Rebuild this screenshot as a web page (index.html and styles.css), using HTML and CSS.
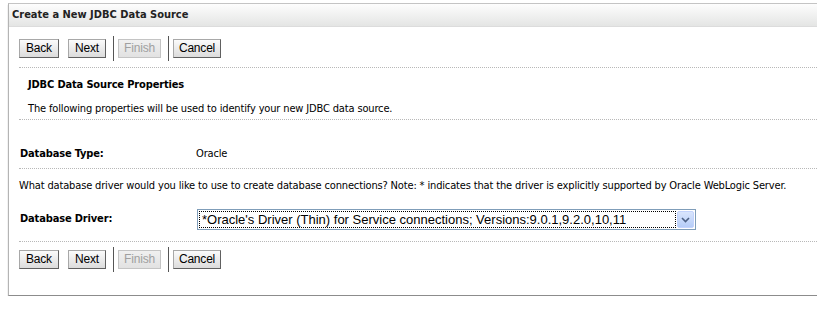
FILE: index.html
```html
<!DOCTYPE html>
<html lang="en">
<head>
  <meta charset="UTF-8" />
  <title>Create a New JDBC Data Source</title>
  <link rel="stylesheet" href="styles.css">
</head>
<body>
  <div class="panel">
    <div class="panel-title">Create a New JDBC Data Source</div>

    <div class="panel-body">
      <div class="button-bar">
        <button class="btn btn-back">Back</button>
        <button class="btn btn-next">Next</button>
        <span class="sep"></span>
        <button class="btn btn-finish" disabled>Finish</button>
        <span class="sep"></span>
        <button class="btn btn-cancel">Cancel</button>
      </div>

      <div class="section">
        <h2>JDBC Data Source Properties</h2>
        <p>The following properties will be used to identify your new JDBC data source.</p>
      </div>

      <div class="field row-type">
        <label>Database Type:</label>
        <span class="value">Oracle</span>
      </div>

      <div class="note">What database driver would you like to use to create database connections? Note: * indicates that the driver is explicitly supported by Oracle WebLogic Server.</div>

      <div class="field row-driver">
        <label>Database Driver:</label>
        <div class="select">
          <span class="select-text">*Oracle's Driver (Thin) for Service connections; Versions:9.0.1,9.2.0,10,11</span>
          <span class="select-arrow">
            <svg width="9" height="6" viewBox="0 0 9 6"><path d="M1 1 L4.5 4.5 L8 1" fill="none" stroke="#4d6185" stroke-width="1.6"/></svg>
          </span>
        </div>
      </div>

      <div class="button-bar bottom">
        <button class="btn btn-back">Back</button>
        <button class="btn btn-next">Next</button>
        <span class="sep"></span>
        <button class="btn btn-finish" disabled>Finish</button>
        <span class="sep"></span>
        <button class="btn btn-cancel">Cancel</button>
      </div>
    </div>
  </div>
</body>
</html>
```

FILE: styles.css
```css
* {
  margin: 0;
  padding: 0;
  box-sizing: border-box;
}

body {
  background: #fff;
  font-family: Tahoma, "DejaVu Sans Condensed", "DejaVu Sans", sans-serif;
  font-size: 11px;
  letter-spacing: -0.15px;
  color: #000;
}

.panel {
  margin: 3px 0 0 8px;
  height: 293px;
  border-top: 1px solid #c4c4c4;
  border-left: 1px solid #b4b4b4;
  border-bottom: 1px solid #8c8c8c;
  box-shadow: 0 2px 1px #b0b0b0;
}

.panel-title {
  height: 23px;
  padding: 0 0 0 3px;
  line-height: 22px;
  font-weight: bold;
  font-size: 11px;
  letter-spacing: 0;
  color: #222;
  background: linear-gradient(#fdfdfd, #e4e5e4);
  border-bottom: 1px solid #dcdcdc;
}

.panel-body {
  padding: 0 0 0 10px;
}

.button-bar {
  display: flex;
  align-items: center;
  height: 41px;
  padding-top: 2px;
  border-bottom: 1px dotted #b8b8b8;
}

.button-bar.bottom {
  border-bottom: none;
  margin-top: 3px;
  height: 27px;
  padding-top: 1px;
}

.btn {
  height: 19px;
  padding: 0;
  margin-right: 9px;
  text-align: center;
  font-family: "Liberation Sans", Arial, sans-serif;
  font-size: 12px;
  letter-spacing: -0.2px;
  color: #000;
  background: linear-gradient(#fbfbfb, #dcdcdc);
  border: 1px solid #7a7a7a;
  border-color: #a8a8a8 #606060 #606060 #a8a8a8;
  border-radius: 0;
}

.btn-back { width: 40px; }
.btn-next { width: 38px; }
.btn-finish { width: 43px; }
.btn-cancel { width: 48px; }

.btn:disabled {
  color: #a0a0a0;
  border-color: #c4c4c4;
  background: linear-gradient(#f0f0f0, #e2e2e2);
}

.sep {
  width: 1px;
  height: 25px;
  background: #555;
  margin: 0 4px 0 -2px;
}

.section {
  padding: 10px 0 0 9px;
  border-bottom: 1px dotted #b8b8b8;
  height: 52px;
}

.section h2 {
  font-size: 11px;
  font-weight: bold;
  line-height: 14px;
}

.section p {
  margin-top: 10px;
  line-height: 14px;
}

.field {
  display: flex;
  align-items: center;
  padding-left: 1px;
}

.field label {
  width: 176px;
  font-weight: bold;
}

.row-type {
  height: 49px;
  padding-top: 19px;
  border-bottom: 1px dotted #b8b8b8;
}

.note {
  padding-top: 10px;
  line-height: 14px;
  height: 32px;
}

.row-driver {
  height: 41px;
  border-bottom: 1px dotted #b8b8b8;
  align-items: flex-start;
  padding-top: 8px;
}

.row-driver label {
  padding-top: 3px;
}

.select {
  display: flex;
  align-items: center;
  width: 499px;
  height: 21px;
  margin-left: 1px;
  border: 1px solid #7f9db9;
  background: #fff;
}

.select-text {
  flex: 1;
  height: 17px;
  margin: 1px;
  padding-left: 2px;
  line-height: 15px;
  font-family: "Liberation Sans", Arial, sans-serif;
  font-size: 13px;
  letter-spacing: 0;
  border: 1px dotted #000;
  white-space: nowrap;
  overflow: hidden;
}

.select-arrow {
  display: flex;
  align-items: center;
  justify-content: center;
  width: 17px;
  height: 17px;
  margin: 1px 1px 1px 0;
  background: linear-gradient(#d9e5fd, #b6cdf8);
  border: 1px solid #c3d3fd;
  border-radius: 2px;
}
```
